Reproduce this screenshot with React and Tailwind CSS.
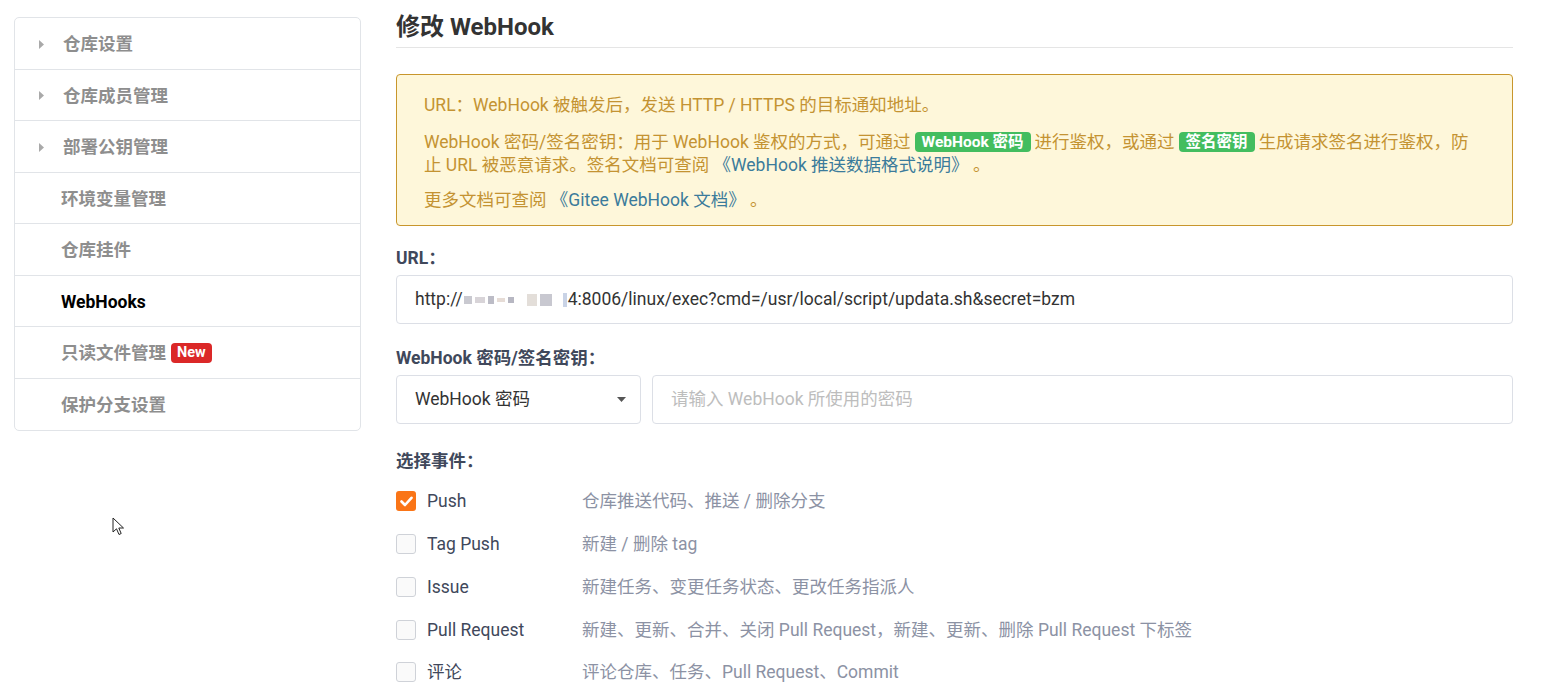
const menu = [
  { label: '仓库设置', caret: true },
  { label: '仓库成员管理', caret: true },
  { label: '部署公钥管理', caret: true },
  { label: '环境变量管理' },
  { label: '仓库挂件' },
  { label: 'WebHooks', active: true },
  { label: '只读文件管理', badge: 'New' },
  { label: '保护分支设置' },
];

const events = [
  { name: 'Push', desc: '仓库推送代码、推送 / 删除分支', checked: true },
  { name: 'Tag Push', desc: '新建 / 删除 tag' },
  { name: 'Issue', desc: '新建任务、变更任务状态、更改任务指派人' },
  { name: 'Pull Request', desc: '新建、更新、合并、关闭 Pull Request，新建、更新、删除 Pull Request 下标签' },
  { name: '评论', desc: '评论仓库、任务、Pull Request、Commit' },
];

function Caret() {
  return (
    <svg width="5" height="9" viewBox="0 0 5 9" className="mr-[19px]">
      <path d="M0 0 L5 4.5 L0 9 Z" fill="#a9a9a9" />
    </svg>
  );
}

function Sidebar() {
  return (
    <div className="mt-[17px] w-[347px] shrink-0 self-start rounded-[5px] border border-[#e1e4e8] bg-white">
      {menu.map((item, i) => (
        <div
          key={item.label}
          className={`flex h-[51.5px] items-center pt-[2px] text-[17.5px] font-bold ${
            i < menu.length - 1 ? 'border-b border-[#e1e4e8]' : ''
          } ${item.caret ? 'pl-[24px]' : 'pl-[46px]'} ${
            item.active ? 'text-black' : 'text-[#8e8e8e]'
          }`}
        >
          {item.caret && <Caret />}
          <span>{item.label}</span>
          {item.badge && (
            <span className="ml-[5px] rounded-[4px] bg-[#db2828] px-[6px] text-[14.5px] leading-[20px] font-bold text-white">
              {item.badge}
            </span>
          )}
        </div>
      ))}
    </div>
  );
}

function Tag({ children }) {
  return (
    <span className="mx-[4px] inline-block rounded-[4px] bg-[#43bd5f] px-[7px] align-[1px] text-[15.5px] leading-[20px] font-bold text-white">
      {children}
    </span>
  );
}

function Checkbox({ checked }) {
  if (checked) {
    return (
      <span className="flex h-[20px] w-[20px] shrink-0 items-center justify-center rounded-[3px] bg-[#fa7517]">
        <svg width="13" height="11" viewBox="0 0 13 11">
          <path d="M1.5 5.5 L5 9 L11.5 1.8" stroke="white" strokeWidth="2.6" fill="none" strokeLinecap="round" strokeLinejoin="round" />
        </svg>
      </span>
    );
  }
  return <span className="h-[20px] w-[20px] shrink-0 rounded-[3px] border border-[#cfd2d8] bg-[#fafafa]" />;
}

export default function App() {
  return (
    <div className="relative min-h-[699px] bg-white font-[family-name:Roboto,'Noto_Sans_CJK_SC',sans-serif]">
      <div className="flex gap-[35px] pl-[14px]">
        <Sidebar />

        <div className="w-[1117px] pt-[12px]">
          <h2 className="border-b border-[#e5e5e5] pb-[4px] text-[24px] leading-[31px] font-bold text-[#333]">
            修改 WebHook
          </h2>

          <div className="mt-[26px] rounded-[4px] border border-[#c8962c] bg-[#fef7da] px-[27px] pt-[19px] pb-[13px] text-[17.5px] leading-[23px] text-[#c49332]">
            <p>URL：WebHook 被触发后，发送 HTTP / HTTPS 的目标通知地址。</p>
            <p className="mt-[14px]">
              WebHook 密码/签名密钥：用于 WebHook 鉴权的方式，可通过<Tag>WebHook 密码</Tag>进行鉴权，或通过<Tag>签名密钥</Tag>生成请求签名进行鉴权，防
              <br />
              止 URL 被恶意请求。签名文档可查阅 <span className="text-[#3b7b9b]">《WebHook 推送数据格式说明》</span> 。
            </p>
            <p className="mt-[12px]">
              更多文档可查阅 <span className="text-[#3b7b9b]">《Gitee WebHook 文档》</span> 。
            </p>
          </div>

          <div className="mt-[21px] text-[17.5px] leading-[22px] font-bold text-[#40485b]">URL：</div>
          <div className="mt-[6px] flex h-[49px] items-center rounded-[4px] border border-[#dcdfe6] pl-[18px] text-[17.5px] text-[#333]">
            <span>http://</span>
            <span className="mx-[1px] inline-flex h-[14px] items-center gap-[3px]">
              <span className="h-[8px] w-[8px] bg-[#c9c9d0]" />
              <span className="h-[6px] w-[10px] bg-[#d8d4d8]" />
              <span className="h-[8px] w-[6px] bg-[#bcbcc6]" />
              <span className="h-[4px] w-[8px] bg-[#e6dcd6]" />
              <span className="h-[6px] w-[6px] bg-[#b7b7c2]" />
              <span className="ml-[10px] h-[12px] w-[10px] bg-[#e3ded9]" />
              <span className="h-[12px] w-[12px] bg-[#c8c8d0]" />
              <span className="ml-[8px] h-[14px] w-[4px] bg-[#c9d3e6]" />
            </span>
            <span>4:8006/linux/exec?cmd=/usr/local/script/updata.sh&amp;secret=bzm</span>
          </div>

          <div className="mt-[23px] text-[17.5px] leading-[22px] font-bold text-[#40485b]">WebHook 密码/签名密钥：</div>
          <div className="mt-[6px] flex gap-[11px]">
            <div className="flex h-[49px] w-[245px] items-center justify-between rounded-[4px] border border-[#dcdfe6] pr-[14px] pl-[18px] text-[17.5px] text-[#333]">
              <span>WebHook 密码</span>
              <svg width="9" height="5" viewBox="0 0 9 5">
                <path d="M0 0 L9 0 L4.5 5 Z" fill="#555" />
              </svg>
            </div>
            <div className="flex h-[49px] flex-1 items-center rounded-[4px] border border-[#dcdfe6] pl-[18px] text-[17.5px] text-[#bdbdbd]">
              请输入 WebHook 所使用的密码
            </div>
          </div>

          <div className="mt-[26px] text-[17.5px] leading-[22px] font-bold text-[#40485b]">选择事件：</div>
          <div className="mt-[8px]">
            {events.map((ev) => (
              <div key={ev.name} className="flex h-[42.75px] items-center text-[17.5px]">
                <Checkbox checked={ev.checked} />
                <span className="ml-[11px] w-[155px] text-[#40485b]">{ev.name}</span>
                <span className="text-[#8c92a4]">{ev.desc}</span>
              </div>
            ))}
          </div>
        </div>
      </div>

      <svg className="absolute top-[517px] left-[112px]" width="13" height="20" viewBox="0 0 13 20">
        <path d="M1 1 L1 15 L4.5 11.8 L7 17.5 L9.2 16.5 L6.8 11 L11.5 11 Z" fill="white" stroke="#222" strokeWidth="1" strokeLinejoin="round" />
      </svg>
    </div>
  );
}
